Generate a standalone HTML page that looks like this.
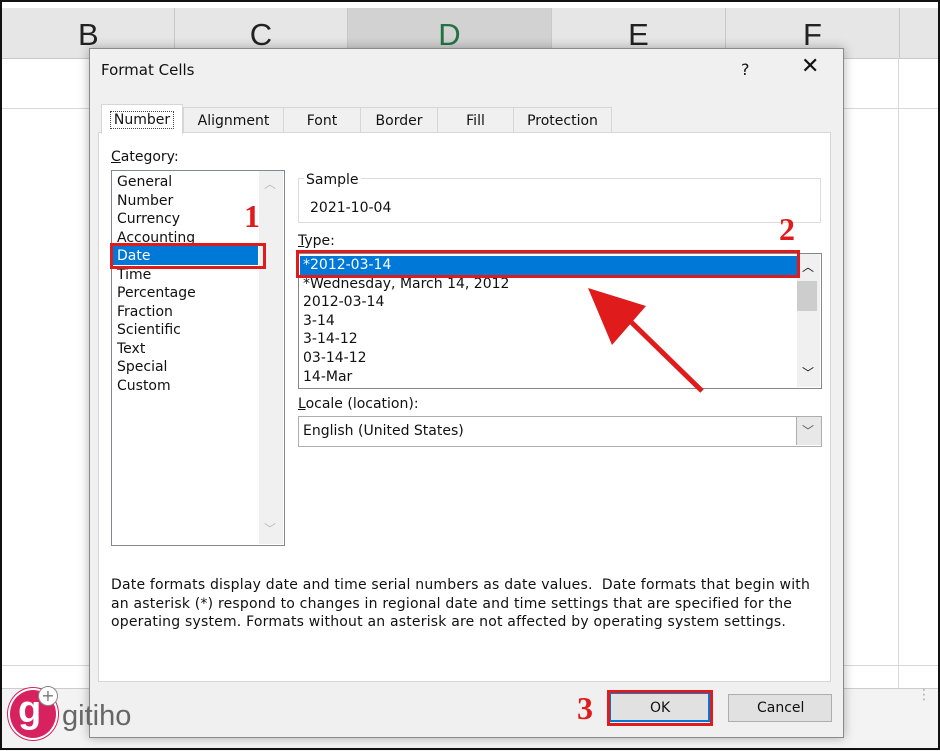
<!DOCTYPE html><html><head><style>
body{margin:0;width:940px;height:750px;position:relative;overflow:hidden;background:#fff;font-family:"DejaVu Sans","Liberation Sans",sans-serif;font-size:14px;color:#111}
.a{position:absolute}
.t{position:absolute;white-space:nowrap;line-height:18px}
.col{position:absolute;top:8px;height:50px;border-right:1px solid #c8c8c8;font-family:"Liberation Sans",sans-serif;font-size:31px;text-align:center;line-height:54px;color:#222}
.tab{position:absolute;top:107px;height:25px;border:1px solid #d6d6d6;border-bottom:none;background:#f0f0f0;text-align:center;line-height:26px;font-size:14px}
.red{position:absolute;border:3px solid #e01b1b}
.num{position:absolute;color:#e01b1b;font-family:"Liberation Serif",serif;font-weight:bold;font-size:32px;line-height:32px}
</style></head><body>
<div class="a" style="left:0;top:0;width:940px;height:8px;background:#fff"></div>
<div class="a" style="left:0;top:8px;width:940px;height:50px;background:#e6e6e6;border-bottom:1px solid #c8c8c8"></div>
<div class="col" style="left:0;width:174px;line-height:54px;text-align:left"><span style="position:absolute;left:78px">B</span></div>
<div class="col" style="left:175px;width:172px">C</div>
<div class="col" style="left:348px;width:203px;background:#d2d2d2;color:#217346">D</div>
<div class="col" style="left:552px;width:173px">E</div>
<div class="col" style="left:726px;width:173px">F</div>
<div class="a" style="left:0;top:108px;width:940px;border-top:1px solid #d8d8d8"></div>
<div class="a" style="left:0;top:665px;width:940px;border-top:1px solid #d8d8d8"></div>
<div class="a" style="left:898px;top:58px;height:630px;border-left:1px solid #d8d8d8"></div>
<div class="a" style="left:0;top:688px;width:940px;height:62px;background:#f3f3f3;border-top:1px solid #ccc"></div>
<div class="t" style="left:917px;top:686px;color:#aaa;font-size:14px">⋮</div>
<!-- dialog -->
<div class="a" style="left:89px;top:48px;width:753px;height:688px;background:#f0f0f0;border:1px solid #8a8a8a;box-shadow:0 0 10px rgba(0,0,0,.3)"></div>
<div class="t" style="left:101px;top:61px;font-size:15px">Format Cells</div>
<div class="t" style="left:741px;top:61px;font-size:16px">?</div>
<div class="t" style="left:801px;top:58px;font-size:22px;font-weight:300">✕</div>
<div class="tab" style="left:101px;top:104px;width:80px;height:29px;background:#fff;line-height:30px;z-index:2"><span style="border:1px dotted #444;padding:0 3px">Number</span></div>
<div class="tab" style="left:183px;width:99px">Alignment</div>
<div class="tab" style="left:283px;width:76px">Font</div>
<div class="tab" style="left:360px;width:76px">Border</div>
<div class="tab" style="left:437px;width:75px">Fill</div>
<div class="tab" style="left:513px;width:97px">Protection</div>
<div class="a" style="left:98px;top:132px;width:731px;height:548px;background:#fff;border:1px solid #d6d6d6"></div>
<div class="t" style="left:111px;top:148px"><u>C</u>ategory:</div>
<div class="a" style="left:111px;top:170px;width:172px;height:374px;border:1px solid #828790;background:#fff"></div>
<div class="a" style="left:259px;top:171px;width:24px;height:373px;background:#f0f0f0"></div>
<div class="t" style="left:264px;top:175px;color:#bbb;font-size:12px">︿</div>
<div class="t" style="left:264px;top:520px;color:#bbb;font-size:12px">﹀</div>
<div class="a" style="left:113px;top:246px;width:145px;height:19px;background:#0078d7"></div>
<div class="t" style="left:117px;top:173px;line-height:18.5px">General<br>Number<br>Currency<br>Accounting<br><span style="color:#fff">Date</span><br>Time<br>Percentage<br>Fraction<br>Scientific<br>Text<br>Special<br>Custom</div>
<div class="red" style="left:110px;top:243px;width:150px;height:20px"></div>
<div class="num" style="left:244px;top:200px">1</div>
<div class="a" style="left:298px;top:178px;width:521px;height:43px;border:1px solid #dcdcdc"></div>
<div class="t" style="left:304px;top:171px;background:#fff;padding:0 2px">Sample</div>
<div class="t" style="left:310px;top:199px">2021-10-04</div>
<div class="t" style="left:298px;top:232px"><u>T</u>ype:</div>
<div class="a" style="left:298px;top:253px;width:522px;height:134px;border:1px solid #828790;background:#fff"></div>
<div class="a" style="left:797px;top:254px;width:23px;height:133px;background:#f0f0f0"></div>
<div class="a" style="left:797px;top:281px;width:20px;height:30px;background:#cdcdcd"></div>
<div class="t" style="left:802px;top:258px;font-size:12px">︿</div>
<div class="t" style="left:802px;top:364px;font-size:12px">﹀</div>
<div class="a" style="left:300px;top:256px;width:497px;height:19px;background:#0078d7"></div>
<div class="t" style="left:303px;top:256px;line-height:18.6px"><span style="color:#fff">*2012-03-14</span><br>*Wednesday, March 14, 2012<br>2012-03-14<br>3-14<br>3-14-12<br>03-14-12<br>14-Mar</div>
<div class="red" style="left:296px;top:250px;width:498px;height:22px"></div>
<div class="num" style="left:779px;top:213px">2</div>
<svg class="a" style="left:0;top:0" width="940" height="750"><line x1="702" y1="391" x2="625" y2="316" stroke="#e01b1b" stroke-width="5"/><polygon points="588,288 646,306 612,345" fill="#e01b1b"/></svg>
<div class="t" style="left:298px;top:395px"><u>L</u>ocale (location):</div>
<div class="a" style="left:298px;top:416px;width:522px;height:29px;border:1px solid #adadad;background:#fff"></div>
<div class="a" style="left:796px;top:417px;width:24px;height:28px;background:#e8e8e8;border-left:1px solid #adadad"></div>
<div class="t" style="left:802px;top:422px;font-size:12px;color:#555">﹀</div>
<div class="t" style="left:303px;top:422px">English (United States)</div>
<div class="t" style="left:111px;top:576px;line-height:18.7px;letter-spacing:0.2px">Date formats display date and time serial numbers as date values.&nbsp; Date formats that begin with<br>an asterisk (*) respond to changes in regional date and time settings that are specified for the<br>operating system. Formats without an asterisk are not affected by operating system settings.</div>
<div class="a" style="left:609px;top:692px;width:101px;height:30px;background:#e1e1e1;border:2px solid #0078d7;box-sizing:border-box"></div>
<div class="red" style="left:607px;top:690px;width:100px;height:30px"></div>
<div class="t" style="left:650px;top:699px">OK</div>
<div class="a" style="left:728px;top:694px;width:104px;height:28px;background:#e1e1e1;border:1px solid #adadad;box-sizing:border-box"></div>
<div class="t" style="left:757px;top:699px">Cancel</div>
<div class="num" style="left:577px;top:692px">3</div>
<!-- logo on top -->
<div class="a" style="left:8px;top:688px;width:46px;height:48px;border-radius:50%;background:#d8215f;border:2px solid #fff;box-shadow:0 0 0 1px #d8215f"></div>
<div class="t" style="left:18px;top:690px;color:#fff;font-size:38px;font-weight:bold;line-height:40px;font-family:'Liberation Sans',sans-serif">g</div>
<div class="a" style="left:38px;top:686px;width:18px;height:18px;border-radius:50%;border:1.5px solid #888;background:#fff;text-align:center;line-height:17px;color:#777;font-size:16px">+</div>
<div class="t" style="left:62px;top:700px;color:#666;font-size:29px;line-height:32px;font-family:'Liberation Sans',sans-serif">gitiho</div>
<div class="a" style="left:0;top:0;width:940px;height:750px;border:2px solid #111;box-sizing:border-box"></div>
</body></html>
